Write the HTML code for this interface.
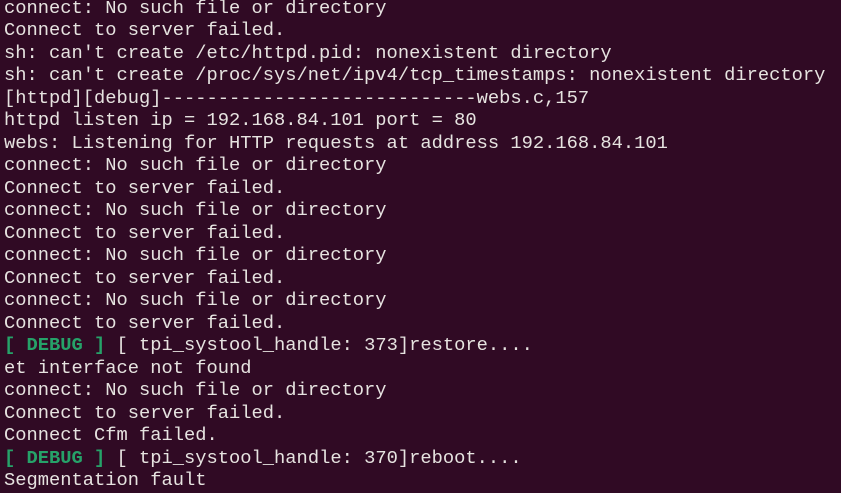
<!DOCTYPE html>
<html><head><style>
html,body{margin:0;padding:0;width:841px;height:493px;overflow:hidden;background:#300a24;}
pre{margin:0;position:absolute;left:4px;top:-3px;font-family:"Liberation Mono",monospace;font-size:18.75px;line-height:22.48px;color:#e6e3e0;white-space:pre;}
.g{color:#26a269;font-weight:bold;}
</style></head><body>
<pre>connect: No such file or directory
Connect to server failed.
sh: can't create /etc/httpd.pid: nonexistent directory
sh: can't create /proc/sys/net/ipv4/tcp_timestamps: nonexistent directory
[httpd][debug]----------------------------webs.c,157
httpd listen ip = 192.168.84.101 port = 80
webs: Listening for HTTP requests at address 192.168.84.101
connect: No such file or directory
Connect to server failed.
connect: No such file or directory
Connect to server failed.
connect: No such file or directory
Connect to server failed.
connect: No such file or directory
Connect to server failed.
<span class="g">[ DEBUG ]</span> [ tpi_systool_handle: 373]restore....
et interface not found
connect: No such file or directory
Connect to server failed.
Connect Cfm failed.
<span class="g">[ DEBUG ]</span> [ tpi_systool_handle: 370]reboot....
Segmentation fault</pre>
</body></html>
